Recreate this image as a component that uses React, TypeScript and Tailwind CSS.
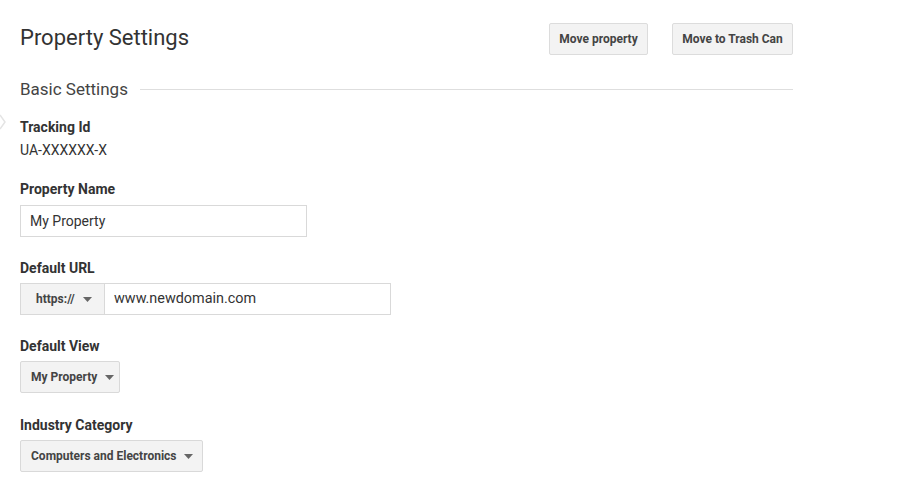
import React from "react";

const Caret = () => (
  <svg width="9" height="5" viewBox="0 0 9 5" className="ml-[8px] shrink-0">
    <path d="M0 0 L9 0 L4.5 5 Z" fill="#666" />
  </svg>
);

export default function App() {
  return (
    <div className="relative w-[900px] h-[487px] bg-white overflow-hidden text-[#333]" style={{ fontFamily: "Roboto, 'Liberation Sans', sans-serif" }}>
      <svg className="absolute left-0 top-[114px]" width="6" height="16" viewBox="0 0 6 16">
        <path d="M0 1 L5 8 L0 15" fill="none" stroke="#e4e4e4" strokeWidth="1.5" />
      </svg>
      <div className="pl-[20px] w-[793px]">
        <div className="flex items-center justify-between pt-[23px] h-[55px]">
          <h1 className="text-[22px] leading-[32px] text-[#333] -mt-[3px]">Property Settings</h1>
          <div className="flex gap-[24px]">
            <button className="h-[32px] w-[99px] bg-[#f3f3f3] border border-[#dcdcdc] rounded-[2px] text-[12px] font-bold text-[#444] whitespace-nowrap">Move property</button>
            <button className="h-[32px] w-[121px] bg-[#f3f3f3] border border-[#dcdcdc] rounded-[2px] text-[12px] font-bold text-[#444] whitespace-nowrap">Move to Trash Can</button>
          </div>
        </div>
        <div className="flex items-center mt-[23px] h-[22px]">
          <span className="text-[17px] text-[#444] leading-[22px] whitespace-nowrap">Basic Settings</span>
          <div className="flex-1 h-px bg-[#dedede] ml-[12px]"></div>
        </div>
        <div className="mt-[18px] text-[14px] font-bold leading-[18px]">Tracking Id</div>
        <div className="mt-[5px] text-[14px] leading-[18px]">UA-XXXXXX-X</div>

        <div className="mt-[21px] text-[14px] font-bold leading-[18px]">Property Name</div>
        <div className="mt-[7px] w-[287px] h-[32px] border border-[#d9d9d9] flex items-center pl-[9px] text-[14px] text-[#333]">My Property</div>

        <div className="mt-[22px] text-[14px] font-bold leading-[18px]">Default URL</div>
        <div className="mt-[6px] flex h-[32px]">
          <div className="w-[85px] h-full bg-[#f3f3f3] border border-[#d9d9d9] flex items-center pl-[15px] text-[12px] font-bold text-[#444] whitespace-nowrap">https://<Caret /></div>
          <div className="w-[286px] h-full border border-l-0 border-[#d9d9d9] flex items-center pl-[9px] text-[14.4px] whitespace-nowrap">www.newdomain.com</div>
        </div>

        <div className="mt-[22px] text-[14px] font-bold leading-[18px]">Default View</div>
        <div className="mt-[6px] flex items-center h-[32px] w-[100px] bg-[#f3f3f3] border border-[#d9d9d9] rounded-[2px] pl-[10px] text-[12px] font-bold text-[#444] whitespace-nowrap">My Property<Caret /></div>

        <div className="mt-[23px] text-[14px] font-bold leading-[18px]">Industry Category</div>
        <div className="mt-[6px] flex items-center h-[32px] w-[183px] bg-[#f3f3f3] border border-[#d9d9d9] rounded-[2px] pl-[10px] text-[12px] font-bold text-[#444] whitespace-nowrap">Computers and Electronics<Caret /></div>
      </div>
    </div>
  );
}
